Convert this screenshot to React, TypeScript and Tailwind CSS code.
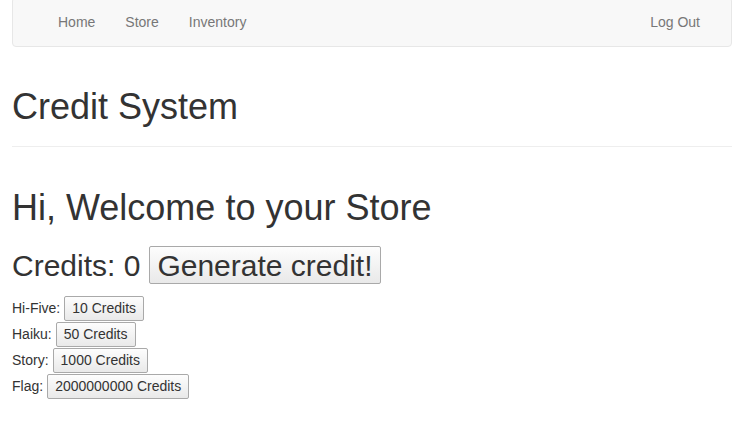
import React from "react";

const btn =
  "inline-flex items-center justify-center border border-[#a9a9a9] rounded-[2px] bg-gradient-to-b from-[#fdfdfd] to-[#e9e9e9] text-[#333] align-middle";

function Item({ label, price }: { label: string; price: string }) {
  return (
    <div className="h-[26px] flex items-center text-[14px]">
      <span>{label}</span>
      <span className="w-[4px]" />
      <button className={btn + " h-[25px] px-[7px] text-[14px]"}>{price}</button>
    </div>
  );
}

export default function App() {
  return (
    <div
      className="min-h-[421px] bg-white text-[#333]"
      style={{ fontFamily: '"Liberation Sans", Arial, sans-serif' }}
    >
      <nav className="ml-[12px] mr-[8px] mt-[-3px] h-[50px] border border-[#e7e7e7] rounded-[4px] bg-[#f8f8f8] flex items-center justify-between text-[14px] text-[#777]">
        <div className="flex items-center pl-[30px] pt-[1px]">
          <a className="px-[15px]">Home</a>
          <a className="px-[15px]">Store</a>
          <a className="px-[15px]">Inventory</a>
        </div>
        <div className="pr-[16px] pt-[1px]">
          <a className="px-[15px]">Log Out</a>
        </div>
      </nav>
      <div className="pl-[12px] pr-[8px]">
        <div className="mt-[40px] pb-[9px] border-b border-[#eee]">
          <h1 className="text-[36px] leading-[40px] mb-[10px]">Credit System</h1>
        </div>
        <h1 className="mt-[41px] text-[36px] leading-[40px]">Hi, Welcome to your Store</h1>
        <div className="mt-[17px] flex items-center h-[40px] text-[30px]">
          <span>Credits: 0</span>
          <span className="w-[9px]" />
          <button className={btn + " h-[38px] px-[7px] text-[30px] leading-[33px]"}>
            Generate credit!
          </button>
        </div>
        <div className="mt-[10px]">
          <Item label="Hi-Five:" price="10 Credits" />
          <Item label="Haiku:" price="50 Credits" />
          <Item label="Story:" price="1000 Credits" />
          <Item label="Flag:" price="2000000000 Credits" />
        </div>
      </div>
    </div>
  );
}
